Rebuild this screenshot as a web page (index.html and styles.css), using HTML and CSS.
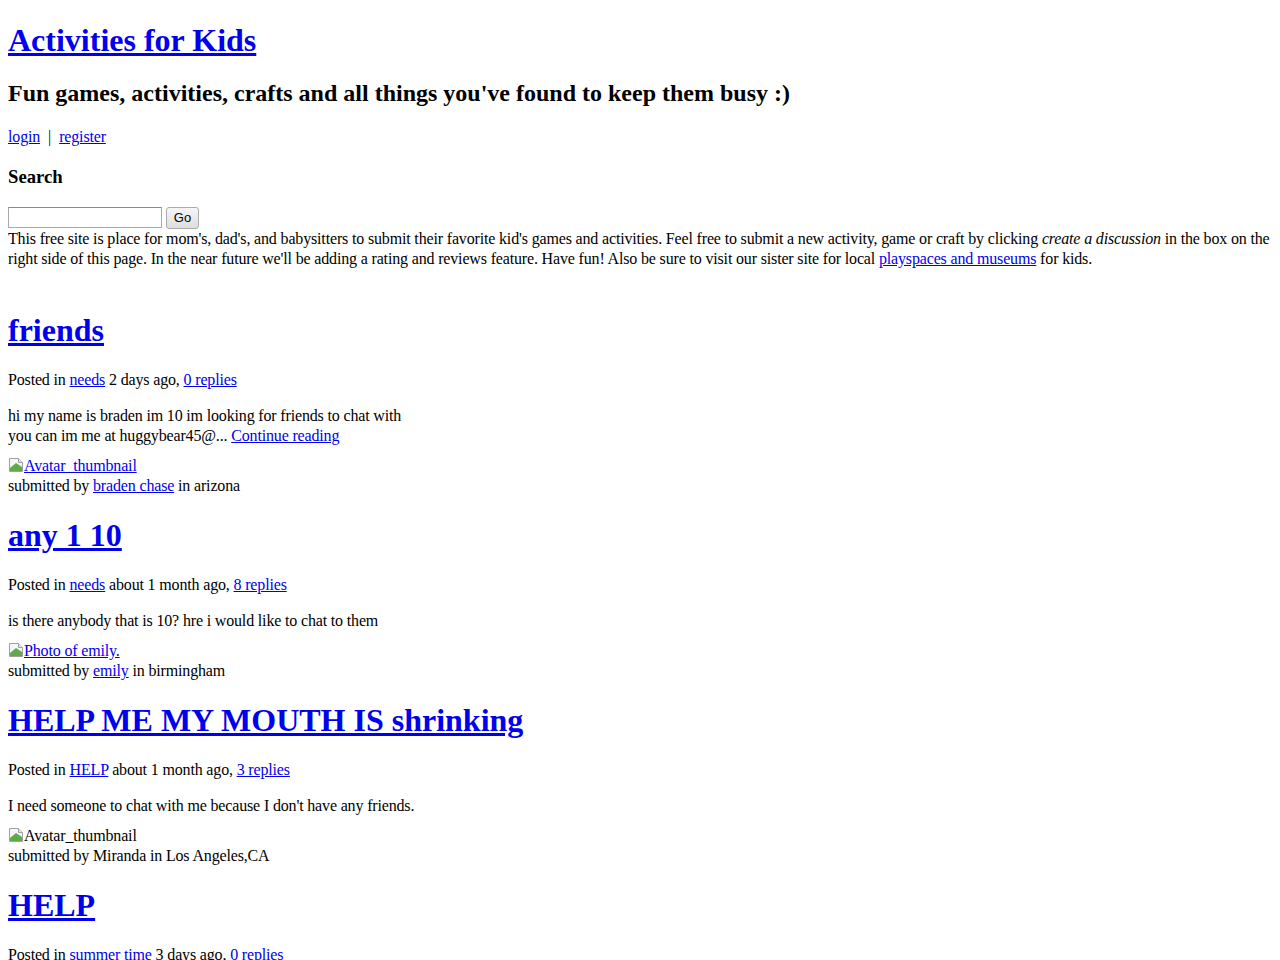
FILE: index.html
```html
<!DOCTYPE html>
<html lang="en">
<head>
  <meta charset="UTF-8">
  <title>Activities for Kids</title>
  <link rel="stylesheet" href="styles.css">
</head>
<body>
  <div id="header">
    <h1 class="site-title"><a href="#">Activities for Kids</a></h1>
    <h2 class="tagline">Fun games, activities, crafts and all things you've found to keep them busy :)</h2>
    <p class="account"><a href="#">login</a><span class="sep">|</span><a href="#">register</a></p>
  </div>

  <div id="search">
    <h3>Search</h3>
    <form class="search-form">
      <input type="text" name="q" class="search-input"><button type="submit" class="search-button">Go</button>
    </form>
  </div>

  <div class="intro">
    This free site is place for mom's, dad's, and babysitters to submit their favorite kid's games and activities. Feel free to submit a new activity, game or craft by clicking <em>create a discussion</em> in the box on the right side of this page. In the near future we'll be adding a rating and reviews feature. Have fun! Also be sure to visit our sister site for local <a href="#">playspaces and museums</a> for kids.
  </div>

  <div id="discussions">

    <div class="post">
      <h1 class="post-title"><a href="#">friends</a></h1>
      <p class="meta">Posted in <a href="#">needs</a> 2 days ago, <a href="#">0 replies</a></p>
      <p class="excerpt">hi my name is braden im 10 im looking for friends to chat with<br>you can im me at huggybear45@... <a href="#">Continue reading</a></p>
      <div class="author">
        <a href="#" class="thumb"><svg class="broken" width="16" height="16" viewBox="0 0 16 16"><path d="M1.5 1.5h9l4 4v9h-13z" fill="#f4f7fa" stroke="#a0a0a0"/><path d="M2 14v-3l6-5 6 4v4z" fill="#62a94a"/><path d="M10.5 1.5v4h4" fill="#e6e6e6" stroke="#a0a0a0"/></svg>Avatar_thumbnail</a><br>
        submitted by <a href="#">braden chase</a> in arizona
      </div>
    </div>

    <div class="post">
      <h1 class="post-title"><a href="#">any 1 10</a></h1>
      <p class="meta">Posted in <a href="#">needs</a> about 1 month ago, <a href="#">8 replies</a></p>
      <p class="excerpt">is there anybody that is 10? hre i would like to chat to them</p>
      <div class="author">
        <a href="#" class="thumb"><svg class="broken" width="16" height="16" viewBox="0 0 16 16"><path d="M1.5 1.5h9l4 4v9h-13z" fill="#f4f7fa" stroke="#a0a0a0"/><path d="M2 14v-3l6-5 6 4v4z" fill="#62a94a"/><path d="M10.5 1.5v4h4" fill="#e6e6e6" stroke="#a0a0a0"/></svg>Photo of emily.</a><br>
        submitted by <a href="#">emily</a> in birmingham
      </div>
    </div>

    <div class="post">
      <h1 class="post-title"><a href="#">HELP ME MY MOUTH IS shrinking</a></h1>
      <p class="meta">Posted in <a href="#">HELP</a> about 1 month ago, <a href="#">3 replies</a></p>
      <p class="excerpt">I need someone to chat with me because I don't have any friends.</p>
      <div class="author">
        <span class="thumb"><svg class="broken" width="16" height="16" viewBox="0 0 16 16"><path d="M1.5 1.5h9l4 4v9h-13z" fill="#f4f7fa" stroke="#a0a0a0"/><path d="M2 14v-3l6-5 6 4v4z" fill="#62a94a"/><path d="M10.5 1.5v4h4" fill="#e6e6e6" stroke="#a0a0a0"/></svg>Avatar_thumbnail</span><br>
        submitted by Miranda in Los Angeles,CA
      </div>
    </div>

    <div class="post">
      <h1 class="post-title"><a href="#">HELP</a></h1>
      <p class="meta">Posted in <a href="#">summer time</a> 3 days ago, <a href="#">0 replies</a></p>
    </div>

  </div>
</body>
</html>
```

FILE: styles.css
```css
body {
  margin: 8px;
  font-family: "Liberation Serif", "Times New Roman", serif;
  font-size: 16px;
  line-height: 20px;
  letter-spacing: -0.16px;
  color: #000;
  background: #fff;
}
a {
  color: #0000ee;
}
h1, h2, h3 {
  line-height: normal;
  letter-spacing: 0;
}
.site-title {
  margin-top: 14px;
}
.account .sep {
  margin: 0 8px;
}
.search-form {
  margin: 0;
  display: flex;
  align-items: center;
  gap: 4px;
  height: 22px;
}
.search-input {
  box-sizing: border-box;
  width: 154px;
  height: 21px;
  padding: 1px 2px;
  border: 1px solid #a9a9a9;
  border-top-color: #8a8a8a;
  font-size: 13px;
}
.search-button {
  box-sizing: border-box;
  width: 33px;
  height: 22px;
  padding: 0;
  border: 1px solid #adadad;
  border-radius: 3px;
  background: linear-gradient(#f6f6f6, #dedede);
  font-family: "Liberation Sans", Arial, sans-serif;
  font-size: 13px;
  letter-spacing: 0;
  color: #000;
}
.intro {
  margin-bottom: 43px;
}
.post-title {
  margin: 21px 0;
}
.meta {
  margin: 0 0 16px;
}
.excerpt {
  margin: 0 0 10px;
}
.broken {
  vertical-align: -2px;
}
```
